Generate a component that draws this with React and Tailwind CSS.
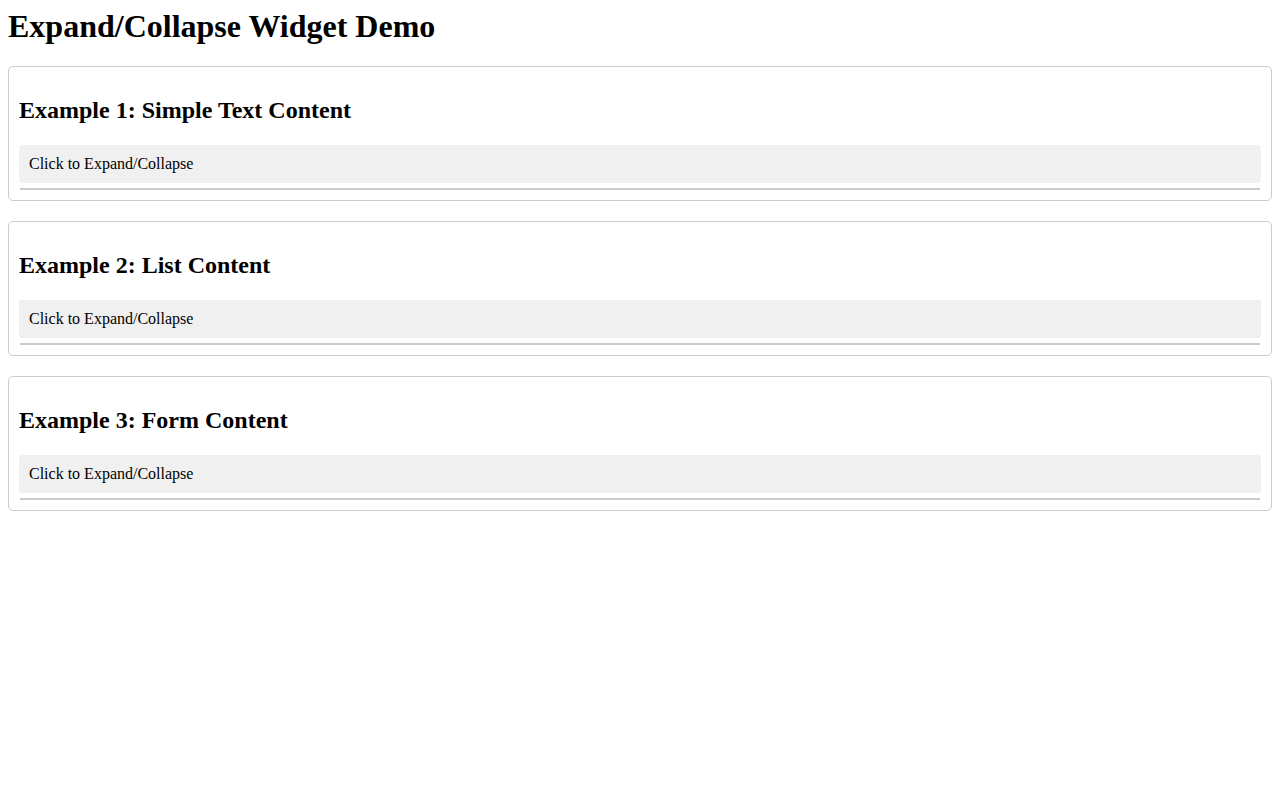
import { useState } from 'react';

const examples = [
    { id: 1, title: 'Example 1: Simple Text Content' },
    { id: 2, title: 'Example 2: List Content' },
    { id: 3, title: 'Example 3: Form Content' },
];

function Collapsible({ title }) {
    const [open, setOpen] = useState(false);

    return (
        <div className="mb-[20px] rounded-[5px] border border-[#ccc] bg-white p-[10px]">
            <h2 className="mt-[19.92px] mb-[20.48px] text-[24px] font-bold leading-[27.6px]">{title}</h2>
            <div
                onClick={() => setOpen(!open)}
                className="cursor-pointer rounded-[3px] bg-[#f0f0f0] px-[10px] py-[10px] text-[16px] leading-[18px]"
            >
                Click to Expand/Collapse
            </div>
            {/* collapsed panel, only its borders show */}
            <div className={`mt-[5px] mx-px border-y border-[#ccc] ${open ? 'p-[10px]' : 'h-[2px]'}`}>
                {open && <p>Content goes here.</p>}
            </div>
        </div>
    );
}

export default function App() {
    return (
        <div className="min-h-[800px] bg-white p-[8px] font-['Liberation_Serif',serif] text-black">
            <h1 className="mb-[22px] text-[32px] font-bold leading-[36px]">Expand/Collapse Widget Demo</h1>
            {examples.map((ex) => (
                <Collapsible key={ex.id} title={ex.title} />
            ))}
        </div>
    );
}
